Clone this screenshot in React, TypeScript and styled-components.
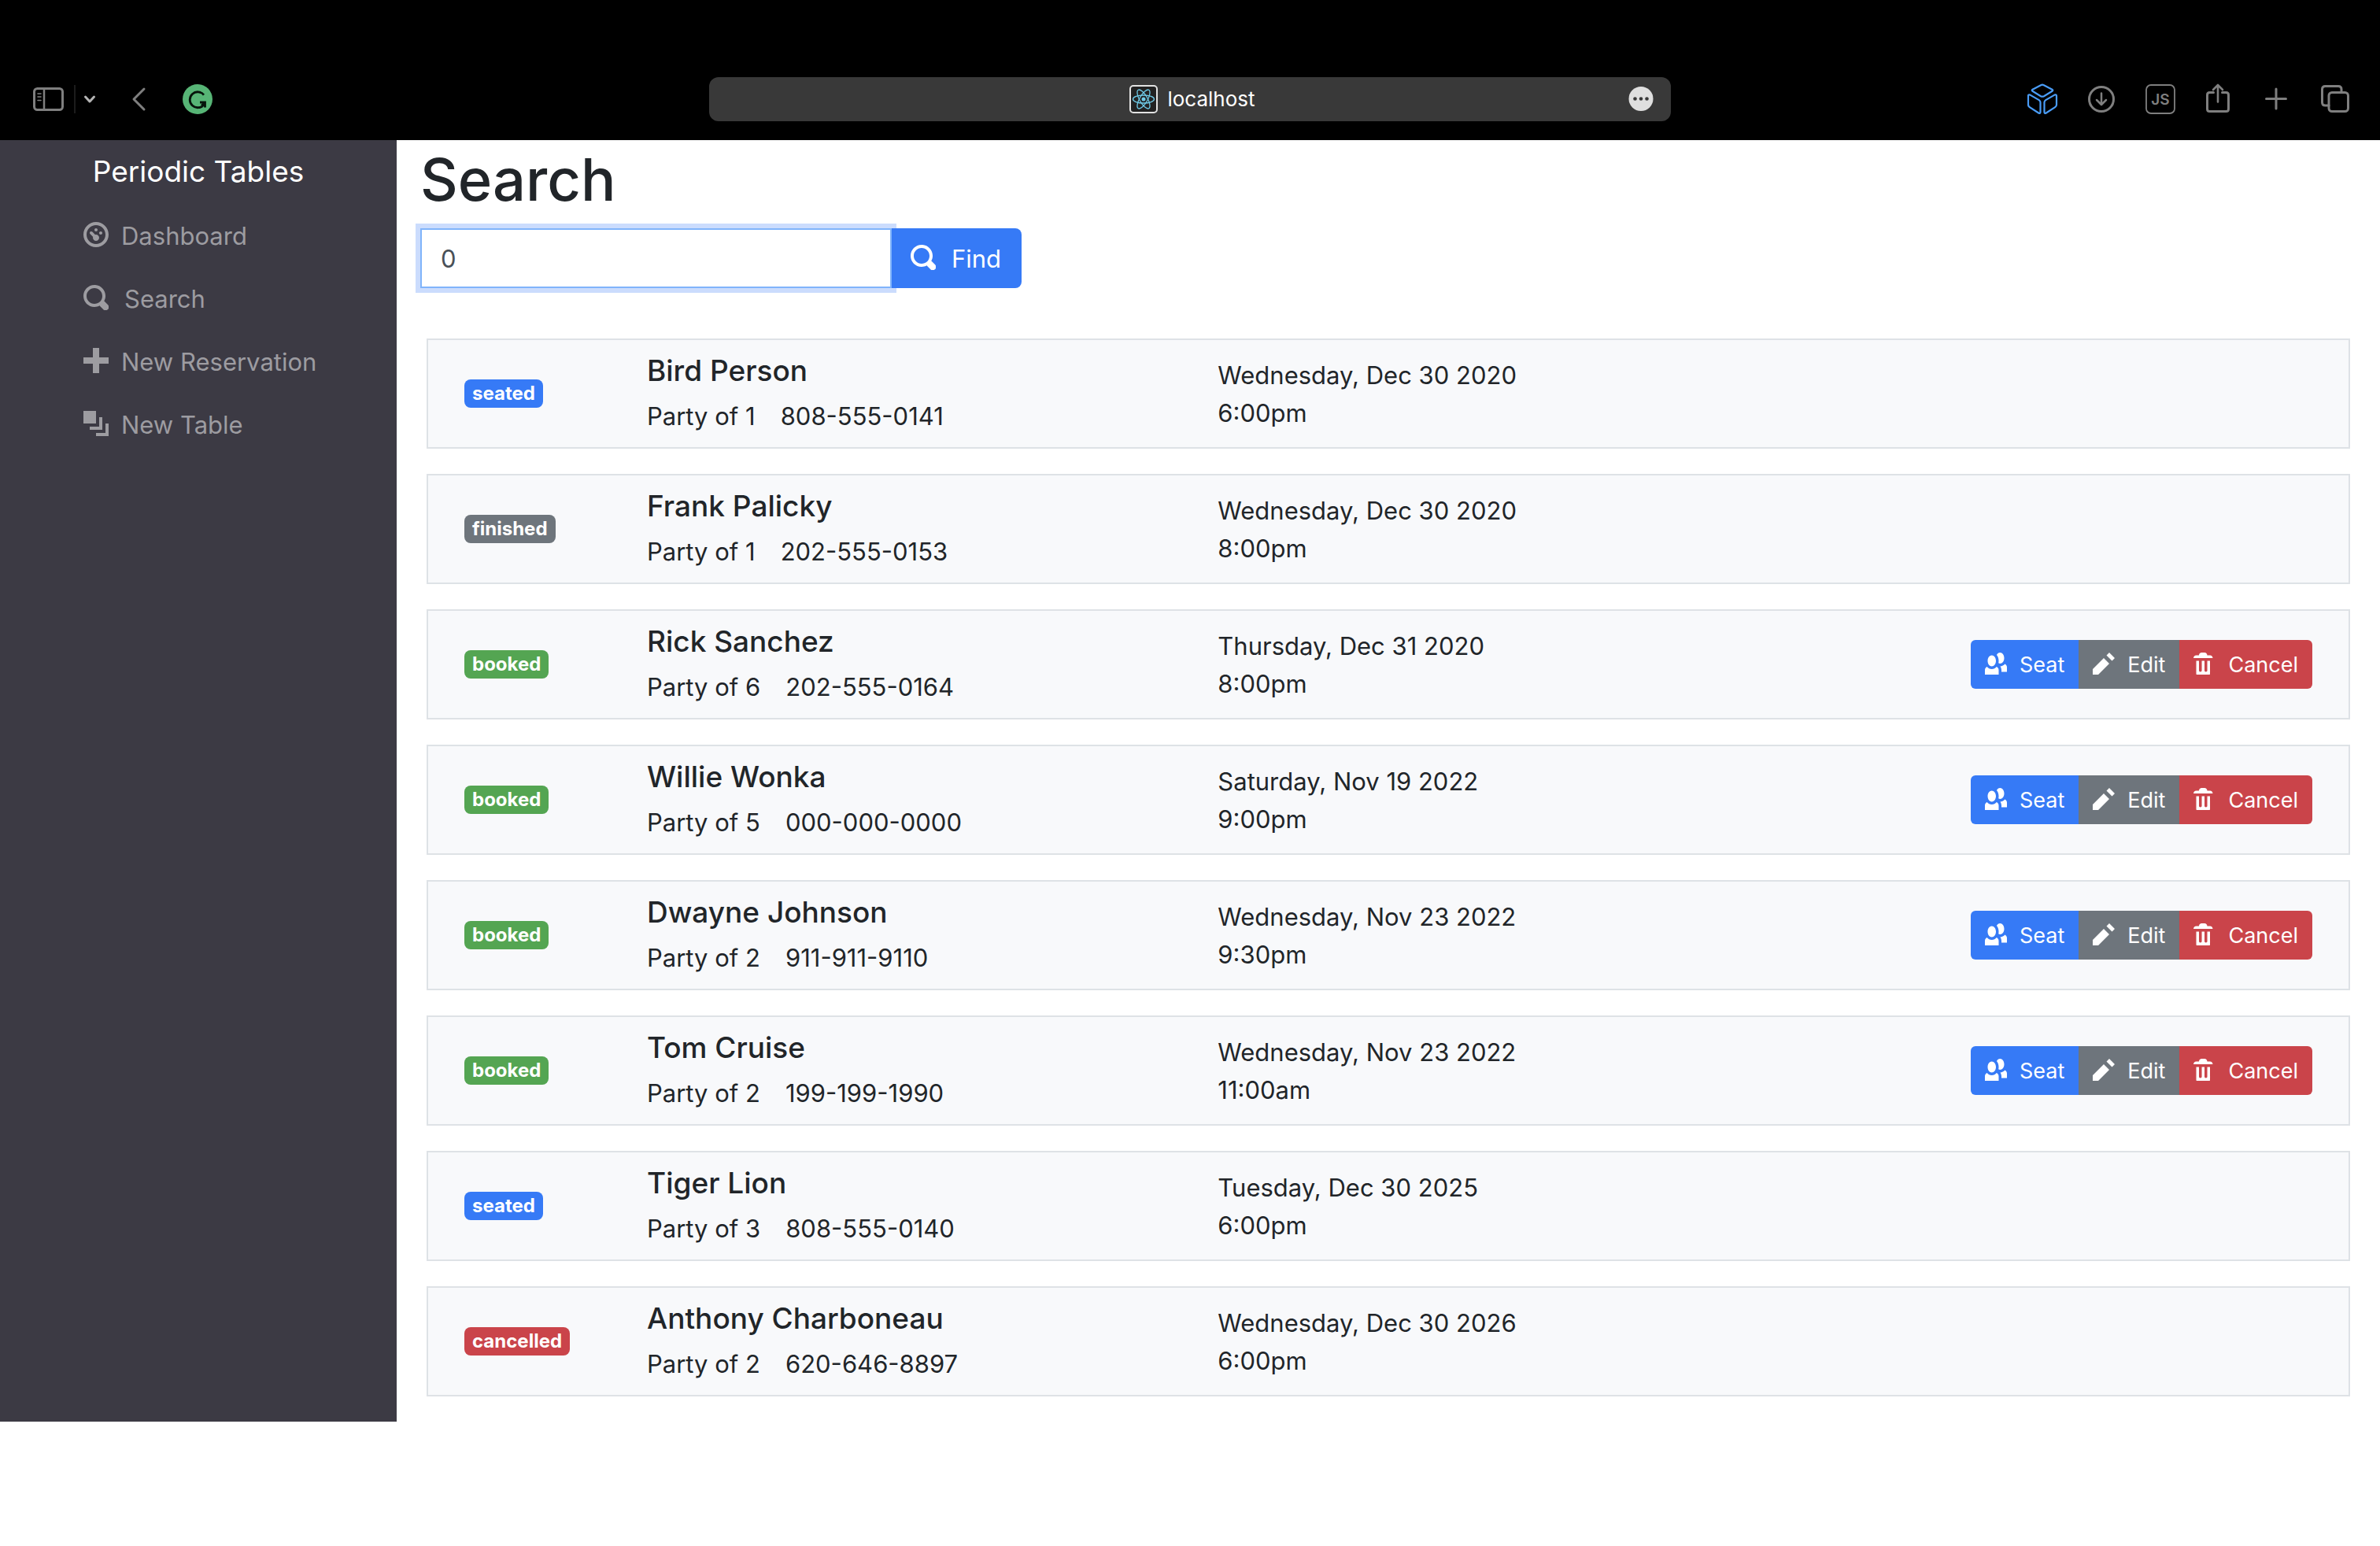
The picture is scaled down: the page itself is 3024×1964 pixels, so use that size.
import React from "react";
import styled, { createGlobalStyle } from "styled-components";

const GlobalStyle = createGlobalStyle`
  *, *::before, *::after { box-sizing: border-box; }
  body {
    margin: 0;
    background: #fff;
    color: #212529;
    font-family: Inter, "Liberation Sans", sans-serif;
    font-size: 31px;
    line-height: 48px;
  }
  button, input { font: inherit; }
`;

const Chrome = styled.header`
  display: grid;
  grid-template-columns: 1fr minmax(600px, 1222px) 1fr;
  align-items: center;
  padding: 98px 38px 24px;
  background: #000;
  color: #7f7f7f;
`;

const ChromeLeft = styled.div`
  display: flex;
  align-items: center;
`;

const ChromeRight = styled.div`
  display: flex;
  align-items: center;
  justify-content: flex-end;
  gap: 34px;
`;

const ChromeButton = styled.button<{ $tone?: string; $before?: number }>`
  display: flex;
  padding: 0;
  margin-left: ${(p) => p.$before ?? 0}px;
  border: 0;
  background: none;
  color: ${(p) => p.$tone ?? "inherit"};
`;

const ChromeDivider = styled.span`
  width: 2px;
  height: 36px;
  margin: 0 10px 0 12px;
  background: #1c1c1c;
`;

const AddressBar = styled.div`
  display: grid;
  grid-template-columns: 1fr auto 1fr;
  align-items: center;
  height: 56px;
  padding: 0 22px 0 28px;
  border-radius: 12px;
  background: #393939;
  color: #fff;
`;

const Address = styled.div`
  grid-column: 2;
  display: flex;
  align-items: center;
  gap: 12px;
  font-size: 26px;
  line-height: 32px;
`;

const AddressMenu = styled(ChromeButton)`
  justify-self: end;
`;

const Shell = styled.div`
  display: grid;
  grid-template-columns: 2fr 10fr;
`;

const Sidebar = styled.nav`
  display: flex;
  flex-direction: column;
  align-items: stretch;
  background: #3c3a44;
`;

const Brand = styled.a`
  padding: 10px 0;
  text-align: center;
  color: #fff;
  font-size: 37px;
  line-height: 60px;
  text-decoration: none;
`;

const NavList = styled.ul`
  margin: 0;
  padding: 2px 0 0 90px;
  list-style: none;
`;

const NavLink = styled.a<{ $gap: number }>`
  display: flex;
  align-items: center;
  gap: ${(p) => p.$gap}px;
  padding: 16px;
  color: #9d9ca1;
  text-decoration: none;
`;

const Main = styled.main`
  padding: 2px 30px 0;
`;

const Title = styled.h1`
  margin: 0 0 14px;
  font-size: 74px;
  line-height: 96px;
  font-weight: 500;
`;

const SearchForm = styled.form`
  display: flex;
  max-width: 764px;
  margin-bottom: 64px;
`;

const SearchInput = styled.input`
  flex: 1;
  min-width: 0;
  height: 76px;
  padding: 12px 24px;
  border: 2px solid #80b4fb;
  border-radius: 0;
  outline: 0;
  background: #fff;
  color: #495057;
  box-shadow: 0 0 0 6px #cbdcfd;
`;

const FindButton = styled.button`
  position: relative;
  display: flex;
  align-items: center;
  gap: 20px;
  padding: 2px 26px 0 24px;
  border: 0;
  border-radius: 0 8px 8px 0;
  background: #367af6;
  color: #fff;
`;

const List = styled.ul`
  margin: 0;
  padding: 0 8px;
  list-style: none;
`;

const Row = styled.li`
  display: grid;
  grid-template-columns: 232px 1fr 1fr 1fr;
  align-items: center;
  margin-bottom: 32px;
  padding: 15px 16px;
  border: 2px solid #dee2e6;
  background: #f8f9fb;
`;

const Cell = styled.div`
  padding: 0 30px;
`;

const DateCell = styled(Cell)`
  padding-top: 2px;
`;

const ActionCell = styled(Cell)`
  display: flex;
  justify-content: flex-end;
`;

const STATUS_COLORS = {
  seated: "#367af6",
  finished: "#6e757c",
  booked: "#54a552",
  cancelled: "#ca444a",
} as const;

type Status = keyof typeof STATUS_COLORS;

const Badge = styled.span<{ $status: Status }>`
  display: block;
  width: max-content;
  padding: 6px 10px;
  border-radius: 8px;
  background: ${(p) => STATUS_COLORS[p.$status]};
  color: #fff;
  font-size: 24px;
  line-height: 24px;
  font-weight: 700;
`;

const Name = styled.h2`
  margin: 0 0 10px;
  font-size: 37px;
  line-height: 48px;
  font-weight: 500;
`;

const Details = styled.div`
  display: flex;
  gap: 32px;
`;

const ButtonGroup = styled.div`
  display: flex;
  overflow: hidden;
  border-radius: 6px;
`;

const ActionButton = styled.button<{ $color: string }>`
  display: flex;
  align-items: center;
  gap: 16px;
  height: 62px;
  padding: 2px 18px 0;
  border: 0;
  background: ${(p) => p.$color};
  color: #fff;
  font-size: 27px;
  line-height: 42px;
`;

const GLYPHS = {
  search:
    "M3.5 0c-1.93 0-3.5 1.57-3.5 3.5s1.57 3.5 3.5 3.5c.59 0 1.17-.14 1.66-.41a1 1 0 0 0 .13.13l1 1a1.02 1.02 0 1 0 1.44-1.44l-1-1a1 1 0 0 0-.16-.13c.27-.49.44-1.06.44-1.66 0-1.93-1.55-3.5-3.5-3.5zm0 1c1.39 0 2.5 1.11 2.5 2.5 0 .66-.24 1.27-.66 1.72-.01.01-.02.02-.03.03a1 1 0 0 0-.13.13c-.44.4-1.04.63-1.69.63-1.39 0-2.5-1.11-2.5-2.5s1.11-2.5 2.5-2.5z",
  plus: "M3 0v3h-3v2h3v3h2v-3h3v-2h-3v-3h-2z",
  layers: "M0 0v4h4v-4h-4zm5 2v3h-3v1h4v-4h-1zm2 2v3h-3v1h4v-4h-1z",
  dashboard:
    "M4 0c-2.2 0-4 1.8-4 4s1.8 4 4 4 4-1.8 4-4-1.8-4-4-4zm0 1c1.66 0 3 1.34 3 3s-1.34 3-3 3-3-1.34-3-3 1.34-3 3-3zm0 1c-.28 0-.5.22-.5.5s.22.5.5.5.5-.22.5-.5-.22-.5-.5-.5zm-1.66 1a.5.5 0 0 0-.19.84l.91.91c-.02.08-.06.16-.06.25 0 .55.45 1 1 1s1-.45 1-1-.45-1-1-1c-.09 0-.17.04-.25.06l-.91-.91a.5.5 0 0 0-.44-.16.5.5 0 0 0-.06 0zm3.16 0c-.28 0-.5.22-.5.5s.22.5.5.5.5-.22.5-.5-.22-.5-.5-.5z",
  people:
    "M5.5 0c-.51 0-.95.35-1.22.88.45.54.72 1.28.72 2.13 0 .29-.03.55-.09.81.19.11.38.19.59.19.83 0 1.5-.9 1.5-2s-.67-2-1.5-2zm-3 1c-.83 0-1.5.9-1.5 2s.67 2 1.5 2 1.5-.9 1.5-2-.67-2-1.5-2zm4.75 3.16c-.43.51-1.02.82-1.69.84.27.38.44.84.44 1.34v.66h2v-1.66c0-.52-.31-.97-.75-1.19zm-6.5 1c-.44.22-.75.67-.75 1.19v1.66h5v-1.66c0-.52-.31-.97-.75-1.19-.45.53-1.06.84-1.75.84s-1.3-.32-1.75-.84z",
  pencil: "M6 0l-1 1 2 2 1-1-2-2zm-2 2l-4 4v2h2l4-4-2-2z",
  trash:
    "M3 0c-.55 0-1 .45-1 1h-1c-.55 0-1 .45-1 1h7c0-.55-.45-1-1-1h-1c0-.55-.45-1-1-1h-1zm-2 3v4.81c0 .11.08.19.19.19h4.63c.11 0 .19-.08.19-.19v-4.81h-1v3.5c0 .28-.22.5-.5.5s-.5-.22-.5-.5v-3.5h-1v3.5c0 .28-.22.5-.5.5s-.5-.22-.5-.5v-3.5h-1z",
};

const GlyphSvg = styled.svg`
  display: block;
  flex: none;
  margin-bottom: 4px;
  fill: currentColor;
`;

function Glyph({ name, size = 32 }: { name: keyof typeof GLYPHS; size?: number }) {
  return (
    <GlyphSvg width={size} height={size} viewBox="0 0 8 8" aria-hidden="true">
      <path d={GLYPHS[name]} />
    </GlyphSvg>
  );
}

const LineSvg = styled.svg`
  display: block;
  fill: none;
  stroke: currentColor;
  stroke-width: 3;
  stroke-linecap: round;
  stroke-linejoin: round;
`;

const NAV: { label: string; icon: keyof typeof GLYPHS; gap: number }[] = [
  { label: "Dashboard", icon: "dashboard", gap: 16 },
  { label: "Search", icon: "search", gap: 20 },
  { label: "New Reservation", icon: "plus", gap: 16 },
  { label: "New Table", icon: "layers", gap: 16 },
];

const RESERVATIONS: {
  status: Status;
  name: string;
  party: number;
  phone: string;
  date: string;
  time: string;
}[] = [
  { status: "seated", name: "Bird Person", party: 1, phone: "808-555-0141", date: "Wednesday, Dec 30 2020", time: "6:00pm" },
  { status: "finished", name: "Frank Palicky", party: 1, phone: "202-555-0153", date: "Wednesday, Dec 30 2020", time: "8:00pm" },
  { status: "booked", name: "Rick Sanchez", party: 6, phone: "202-555-0164", date: "Thursday, Dec 31 2020", time: "8:00pm" },
  { status: "booked", name: "Willie Wonka", party: 5, phone: "000-000-0000", date: "Saturday, Nov 19 2022", time: "9:00pm" },
  { status: "booked", name: "Dwayne Johnson", party: 2, phone: "911-911-9110", date: "Wednesday, Nov 23 2022", time: "9:30pm" },
  { status: "booked", name: "Tom Cruise", party: 2, phone: "199-199-1990", date: "Wednesday, Nov 23 2022", time: "11:00am" },
  { status: "seated", name: "Tiger Lion", party: 3, phone: "808-555-0140", date: "Tuesday, Dec 30 2025", time: "6:00pm" },
  { status: "cancelled", name: "Anthony Charboneau", party: 2, phone: "620-646-8897", date: "Wednesday, Dec 30 2026", time: "6:00pm" },
];

function BrowserChrome() {
  return (
    <Chrome>
      <ChromeLeft>
        <ChromeButton aria-label="Toggle sidebar">
          <LineSvg width="44" height="32" viewBox="-4 0 44 32">
            <rect x="1.5" y="2.5" width="36" height="27" rx="4" />
            <path d="M14 3v26" strokeWidth="2.5" />
            <path d="M6 9h4M6 13h4M6 17.500h4" strokeWidth="1.600" />
          </LineSvg>
        </ChromeButton>
        <ChromeDivider />
        <ChromeButton aria-label="Tab groups" $tone="#b4b4b4">
          <LineSvg width="16" height="12" viewBox="0 0 16 12">
            <path d="M2.500 3l5.500 6 5.500-6" />
          </LineSvg>
        </ChromeButton>
        <ChromeButton aria-label="Back" $before={44}>
          <LineSvg width="20" height="32" viewBox="0 0 20 32">
            <path d="M17 3L4 16l13 13" />
          </LineSvg>
        </ChromeButton>
        <ChromeButton aria-label="Grammar checker" $before={46}>
          <svg width="38" height="38" viewBox="0 0 38 38">
            <circle cx="19" cy="19" r="19" fill="#57b576" />
            <path
              d="M27 13.500A10 10 0 1 0 27 26M22 23h6.500v6.500M28 23.500l-4 3.500"
              fill="none"
              stroke="#06140b"
              strokeWidth="2.800"
            />
          </svg>
        </ChromeButton>
      </ChromeLeft>
      <AddressBar>
        <Address>
          <svg width="36" height="36" viewBox="0 0 36 36" aria-hidden="true">
            <rect x="1" y="1" width="34" height="34" rx="4" fill="#222" stroke="#e2e2e2" strokeWidth="2" />
            <g fill="none" stroke="#6fcbe8" strokeWidth="1.300">
              <ellipse cx="18" cy="18" rx="13.500" ry="5" />
              <ellipse cx="18" cy="18" rx="13.500" ry="5" transform="rotate(60 18 18)" />
              <ellipse cx="18" cy="18" rx="13.500" ry="5" transform="rotate(120 18 18)" />
            </g>
            <circle cx="18" cy="18" r="2.500" fill="#6fcbe8" />
          </svg>
          localhost
        </Address>
        <AddressMenu aria-label="Page menu">
          <svg width="32" height="32" viewBox="0 0 32 32">
            <circle cx="16" cy="15.500" r="15.500" fill="#dfdfdf" />
            <g fill="#393939">
              <circle cx="8.500" cy="15.500" r="2.300" />
              <circle cx="16" cy="15.500" r="2.300" />
              <circle cx="23.500" cy="15.500" r="2.300" />
            </g>
          </svg>
        </AddressMenu>
      </AddressBar>
      <ChromeRight>
        <ChromeButton aria-label="Sandbox" $tone="#4a9df8">
          <LineSvg width="40" height="40" viewBox="1 0 40 40">
            <g strokeWidth="2.200">
              <path d="M18 2.200q2-1 4 0l10.500 5.600q1.600 1 0 2L22 16.200q-2 1-4 0L7.500 9.800q-1.600-1 0-2z" />
              <path d="M4.500 14.600Q2 13.600 2 16v11q0 2 1.800 3.200l11.400 7.300q2.300 1.200 2.300-1.200V24q0-1.800-1.700-2.900z" />
              <path d="M35.500 14.600Q38 13.600 38 16v11q0 2-1.800 3.200l-11.400 7.300q-2.300 1.200-2.300-1.200V24q0-1.800 1.700-2.900z" />
            </g>
          </LineSvg>
        </ChromeButton>
        <ChromeButton aria-label="Downloads">
          <LineSvg width="40" height="40" viewBox="0 0 40 40">
            <circle cx="20" cy="20" r="15.500" />
            <path d="M20 12.500v14M14 21l6 6 6-6" strokeWidth="2.500" />
          </LineSvg>
        </ChromeButton>
        <ChromeButton aria-label="JavaScript">
          <LineSvg width="40" height="40" viewBox="-1 0 40 40">
            <rect x="2" y="2" width="36" height="36" rx="6" strokeWidth="1.800" />
            <text
              x="20"
              y="27"
              textAnchor="middle"
              fill="currentColor"
              stroke="none"
              fontSize="19"
              fontWeight="600"
            >
              JS
            </text>
          </LineSvg>
        </ChromeButton>
        <ChromeButton aria-label="Share">
          <LineSvg width="40" height="40" viewBox="0 0 40 40">
            <path d="M14.500 11.500h-5q-3 0-3 3v18q0 3 3 3h21q3 0 3-3v-18q0-3-3-3h-5" />
            <path d="M20 23.500V2M14 8l6-6 6 6" strokeWidth="2.600" />
          </LineSvg>
        </ChromeButton>
        <ChromeButton aria-label="New tab">
          <LineSvg width="40" height="40" viewBox="0 0 40 40">
            <path d="M20 7v25M7.500 19.500h25" />
          </LineSvg>
        </ChromeButton>
        <ChromeButton aria-label="Tab overview">
          <LineSvg width="40" height="40" viewBox="-1 0 40 40">
            <path d="M12 28H7.500q-4 0-4-4V7.500q0-4 4-4H24q4 0 4 4V10" />
            <rect x="12" y="11.500" width="24.500" height="24" rx="4" />
          </LineSvg>
        </ChromeButton>
      </ChromeRight>
    </Chrome>
  );
}

export default function App() {
  return (
    <>
      <GlobalStyle />
      <BrowserChrome />
      <Shell>
        <Sidebar>
          <Brand href="#">Periodic Tables</Brand>
          <NavList>
            {NAV.map((item) => (
              <li key={item.label}>
                <NavLink href="#" $gap={item.gap}>
                  <Glyph name={item.icon} />
                  {item.label}
                </NavLink>
              </li>
            ))}
          </NavList>
        </Sidebar>
        <Main>
          <Title>Search</Title>
          <SearchForm onSubmit={(e) => e.preventDefault()}>
            <SearchInput aria-label="Mobile number" type="text" defaultValue="0" />
            <FindButton type="submit">
              <Glyph name="search" />
              Find
            </FindButton>
          </SearchForm>
          <List>
            {RESERVATIONS.map((r) => (
              <Row key={r.phone}>
                <Cell>
                  <Badge $status={r.status}>{r.status}</Badge>
                </Cell>
                <Cell>
                  <Name>{r.name}</Name>
                  <Details>
                    <span>Party of {r.party}</span>
                    <span>{r.phone}</span>
                  </Details>
                </Cell>
                <DateCell>
                  <div>{r.date}</div>
                  <div>{r.time}</div>
                </DateCell>
                <ActionCell>
                  {r.status === "booked" && (
                    <ButtonGroup>
                      <ActionButton $color="#367af6">
                        <Glyph name="people" size={28} />
                        Seat
                      </ActionButton>
                      <ActionButton $color="#6e757c">
                        <Glyph name="pencil" size={28} />
                        Edit
                      </ActionButton>
                      <ActionButton $color="#ca444a">
                        <Glyph name="trash" size={28} />
                        Cancel
                      </ActionButton>
                    </ButtonGroup>
                  )}
                </ActionCell>
              </Row>
            ))}
          </List>
        </Main>
      </Shell>
    </>
  );
}
